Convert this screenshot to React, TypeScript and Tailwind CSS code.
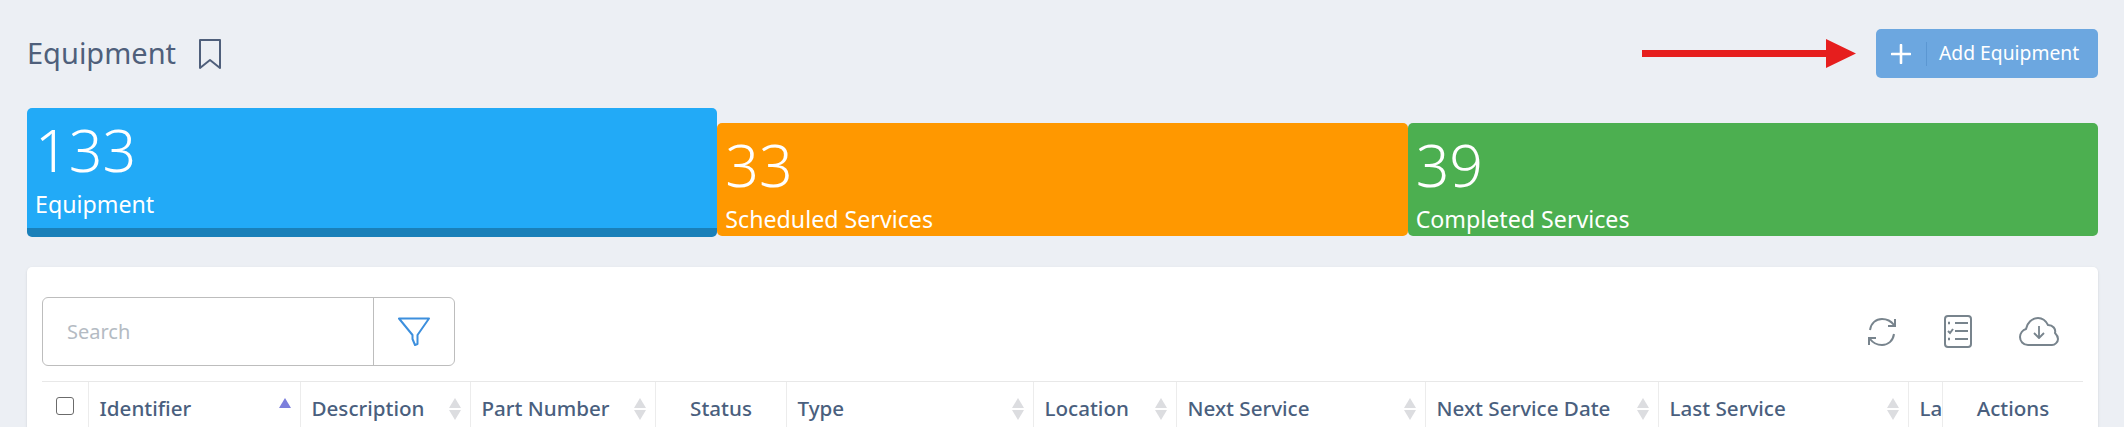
import React from "react";

const font = { fontFamily: '"Noto Sans", sans-serif' };

const columns = [
  { label: "Identifier", width: "w-[212px]", sort: "asc" },
  { label: "Description", width: "w-[170px]", sort: "none" },
  { label: "Part Number", width: "w-[185px]", sort: "none" },
  { label: "Status", width: "w-[131px]", center: true },
  { label: "Type", width: "w-[247px]", sort: "none" },
  { label: "Location", width: "w-[143px]", sort: "none" },
  { label: "Next Service", width: "w-[249px]", sort: "none" },
  { label: "Next Service Date", width: "w-[233px]", sort: "none" },
  { label: "Last Service", width: "w-[250px]", sort: "none" },
  { label: "Last Updated", width: "w-[34px]" },
];

const SortArrows = ({ asc }: { asc?: boolean }) => (
  <svg width="12" height="22" viewBox="0 0 12 22" className="absolute right-[9px] top-[16px]">
    <path d="M6 0 L12 10 H0 Z" fill={asc ? "#7c7fdc" : "#dcdde0"} />
    {!asc && <path d="M0 12 H12 L6 22 Z" fill="#dcdde0" />}
  </svg>
);

const StatCard = ({ value, label, className }: { value: string; label: string; className: string }) => (
  <div className={`flex-1 rounded-[5px] text-white pl-[8px] ${className}`}>
    <div className="text-[59px] font-light leading-[60px] mt-[11px]">{value}</div>
    <div className="text-[23.2px] leading-[30px] mt-[10px]">{label}</div>
  </div>
);

export default function App() {
  return (
    <div className="relative h-[427px] overflow-hidden bg-[#eceff4] pl-[27px] pr-[26px]" style={font}>
      {/* header */}
      <div className="flex items-start justify-between h-[108px] pt-[29px]">
        <div className="flex items-center gap-[22px] h-[49px] text-[#4f5f7b]">
          <h1 className="text-[29px] font-normal -mt-[2px]">Equipment</h1>
          <svg width="24" height="32" viewBox="0 0 24 32" fill="none" stroke="currentColor" strokeWidth="2" strokeLinejoin="round">
            <path d="M2 2 H22 V30 L12 22 L2 30 Z" />
          </svg>
        </div>
        <button className="flex items-center w-[222px] h-[49px] rounded-[5px] bg-[#6ca7e0] text-white text-[19.3px]">
          <span className="flex justify-center w-[50px]">
            <svg width="20" height="20" viewBox="0 0 20 20" stroke="currentColor" strokeWidth="2.6" strokeLinecap="round">
              <path d="M10 1 V19 M1 10 H19" />
            </svg>
          </span>
          <span className="h-[24px] w-px bg-[#5b97d2]" />
          <span className="pl-[12px]">Add Equipment</span>
        </button>
      </div>

      {/* annotation arrow */}
      <svg width="214" height="30" viewBox="0 0 214 30" className="absolute left-[1642px] top-[39px]">
        <path d="M0 11 H184 V0 L214 14.5 L184 29 V18 H0 Z" fill="#e61e1e" />
      </svg>

      {/* stats */}
      <div className="flex items-end h-[129px]">
        <div className="flex-1 h-[129px] rounded-[5px] overflow-hidden bg-[#22aaf7] border-b-[9px] border-[#1a80b9] text-white pl-[8px]">
          <div className="text-[59px] font-light leading-[60px] mt-[11px]">133</div>
          <div className="text-[23.2px] leading-[30px] mt-[10px]">Equipment</div>
        </div>
        <StatCard value="33" label="Scheduled Services" className="bg-[#ff9800] h-[113px] mb-px" />
        <StatCard value="39" label="Completed Services" className="bg-[#4caf50] h-[113px] mb-px" />
      </div>

      {/* table card */}
      <div className="mt-[30px] h-[200px] rounded-t-[5px] bg-white px-[15px] pt-[30px] shadow-sm">
        <div className="flex items-center justify-between h-[69px]">
          <div className="flex w-[413px] h-[69px] rounded-[6px] border border-[#bdbdbd]">
            <div className="flex items-center w-[331px] pl-[24px] text-[20px] text-[#b4bbc3] border-r border-[#bdbdbd]">Search</div>
            <div className="flex flex-1 items-center justify-center">
              <svg width="32" height="29" viewBox="0 0 32 29" fill="none" stroke="#3d8fdd" strokeWidth="2" strokeLinejoin="round">
                <path d="M1 1.5 H31 L19.5 18 V27 L17 28 L14.5 22 V18 Z" />
              </svg>
            </div>
          </div>
          <div className="flex items-center gap-[47px] pr-[24px] text-[#78848d]">
            <svg width="30" height="30" viewBox="0 0 30 30" fill="none" stroke="currentColor" strokeWidth="2">
              <path d="M3 13 C4 6 9 2 15 2 C20 2 24 4 27 8 M27 17 C26 24 21 28 15 28 C10 28 6 26 3 22" />
              <path d="M28 2 V9 H21 M2 28 V21 H9" />
            </svg>
            <svg width="28" height="33" viewBox="0 0 28 33" fill="none" stroke="currentColor" strokeWidth="2">
              <rect x="1" y="1" width="26" height="31" rx="3" />
              <path d="M11 8 H24 M11 16 H24 M11 24 H24" />
              <path d="M4 8 H6 M4 24 H6" strokeWidth="2.4" />
              <path d="M4 16 L6 18 L9 14" />
            </svg>
            <svg width="40" height="29" viewBox="0 0 40 29" fill="none" stroke="currentColor" strokeWidth="2" strokeLinejoin="round">
              <path d="M9 28 C4 28 1 24 1 20 C1 16 4 13 7 12 C8 6 13 1 19 1 C24 1 27 4 29 8 C34 8 37 12 36 16 C38 18 39 20 39 22 C39 25 36 28 33 28 Z" />
              <path d="M20 9 V21 M15 16 L20 21 L25 16" strokeWidth="1.8" />
            </svg>
          </div>
        </div>

        {/* header row */}
        <div className="flex h-[60px] mt-[15px] border-t border-[#e8e8e8] text-[20.6px] font-medium text-[#4a5f7e] overflow-hidden">
          <div className="w-[46px] shrink-0 pl-[14px] pt-[15px]">
            <div className="w-[18px] h-[18px] rounded-[3px] border border-[#6b6b6b]" />
          </div>
          {columns.map((col) => (
            <div
              key={col.label}
              className={`relative shrink-0 h-full overflow-hidden whitespace-nowrap border-l border-[#ececec] pt-[11px] ${col.width} ${col.center ? "text-center" : "pl-[10.5px]"}`}
            >
              {col.label}
              {col.sort && <SortArrows asc={col.sort === "asc"} />}
            </div>
          ))}
          <div className="flex-1 text-center pt-[11px] border-l border-[#ececec]">Actions</div>
        </div>
      </div>
    </div>
  );
}
